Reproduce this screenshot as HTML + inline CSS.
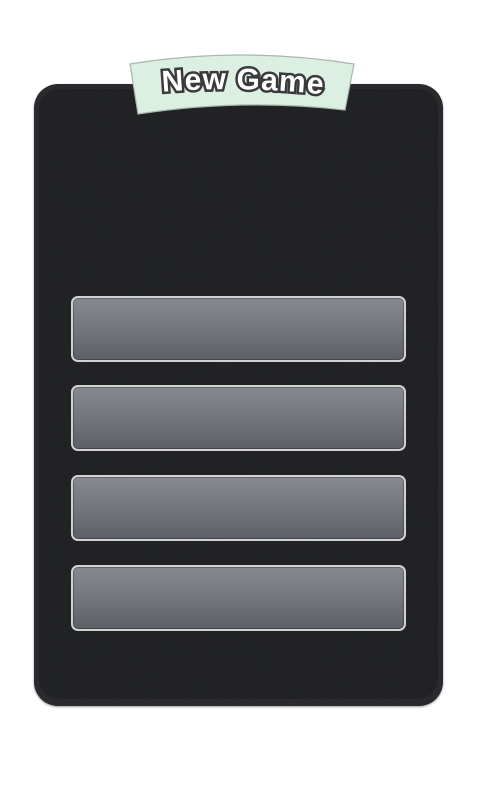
<!DOCTYPE html>
<html><head><meta charset="utf-8"><style>
html,body{margin:0;padding:0;background:#fff;width:480px;height:800px;overflow:hidden;position:relative;font-family:"Liberation Sans",sans-serif}
.panel{position:absolute;left:34px;top:84px;width:409px;height:622px;border-radius:24px;background:#2a2a2e;box-shadow:0 1px 2px rgba(0,0,0,.4)}
.inner{position:absolute;left:5px;top:5px;right:5px;bottom:7px;border-radius:20px;background:#212224;
background-image:repeating-linear-gradient(45deg,rgba(255,255,255,.015) 0 1px,transparent 1px 3px),repeating-linear-gradient(-45deg,rgba(0,0,0,.08) 0 1px,transparent 1px 3px);}
.btn{position:absolute;left:71px;width:331px;height:62px;border:2px solid #d2d2d4;border-radius:7px;background:linear-gradient(#878990,#72747b 55%,#5d5f67);box-shadow:inset 0 0 0 1px rgba(0,0,0,.25)}
svg{position:absolute;left:0;top:0}
</style></head><body>
<div class="panel"><div class="inner"></div></div>
<div class="btn" style="top:296px"></div>
<div class="btn" style="top:385px"></div>
<div class="btn" style="top:475px"></div>
<div class="btn" style="top:565px"></div>
<svg width="480" height="130" viewBox="0 0 480 130">
<defs><path id="arc" d="M150 93 Q242 84 336 96"/></defs>
<path d="M130 64 Q242 46 354 64 L345 110 Q242 98 138 114 Z" fill="#dcefe3" stroke="#a9b7ae" stroke-width="1.2"/>
<text font-family="'Liberation Sans',sans-serif" font-weight="bold" font-size="30" fill="#fff" stroke="#3a3a3c" stroke-width="5" paint-order="stroke" text-anchor="middle" letter-spacing="1"><textPath href="#arc" startOffset="50%">New Game</textPath></text>
</svg>
</body></html>
